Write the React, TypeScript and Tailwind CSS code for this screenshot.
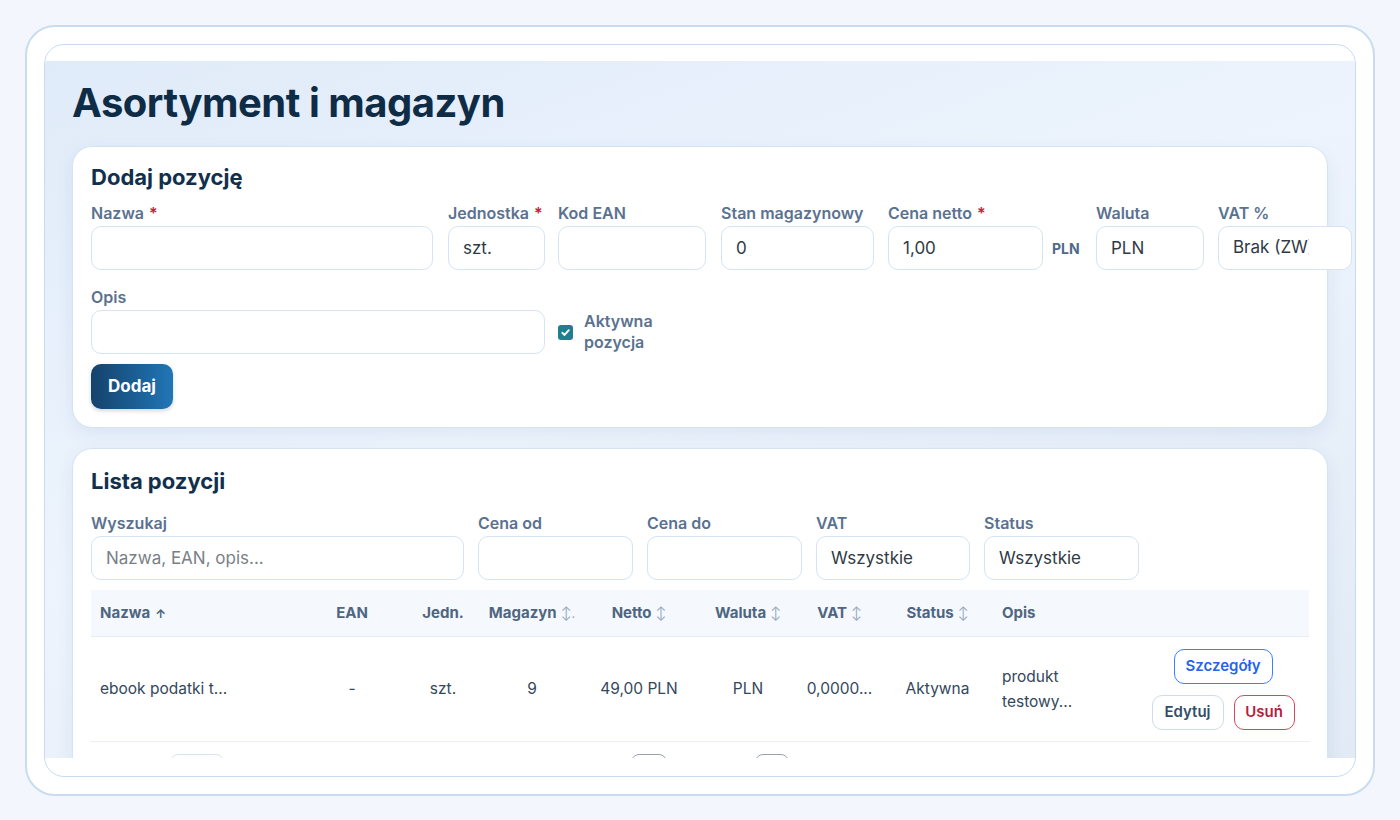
import React from 'react';

const FIELD_INPUT =
  'h-[44px] w-full rounded-[10px] border border-[#d5e3f3] bg-white px-[14px] text-[17px] text-[#2f3a45] outline-none placeholder:text-[#7a7f86]';

function Label({ text, required }: { text: string; required?: boolean }) {
  return (
    <div className="h-5 text-[16px] leading-5 font-semibold text-[#5a7290] whitespace-nowrap">
      {text}
      {required && <span className="ml-[5px] text-[#c8203a]">*</span>}
    </div>
  );
}

function Field({
  label,
  required,
  value,
  placeholder,
  className,
}: {
  label: string;
  required?: boolean;
  value?: string;
  placeholder?: string;
  className: string;
}) {
  return (
    <div className={`flex shrink-0 flex-col gap-[3px] ${className}`}>
      <Label text={label} required={required} />
      <input className={FIELD_INPUT} defaultValue={value} placeholder={placeholder} readOnly />
    </div>
  );
}

const COLS = 'grid grid-cols-[214px_94px_88px_90px_124px_94px_89px_107px_146px_172px]';

function SortHead({ text, arrow = '↕' }: { text: string; arrow?: string }) {
  return (
    <span>
      {text}
      <span className={arrow === '↑' ? 'ml-[5px] text-[12px] text-[#4f6680]' : 'ml-[4px] text-[13px] font-normal text-[#9aabbd]'}>
        {arrow}
      </span>
    </span>
  );
}

export default function App() {
  return (
    <div className="h-[820px] bg-[#f3f7fd] p-[25px] font-['Inter',sans-serif]">
      {/* Outer frame */}
      <div className="h-[771px] rounded-[30px] border-2 border-[#c9dcef] bg-white p-[17px]">
        {/* Inner frame */}
        <div className="h-full overflow-hidden rounded-[20px] border border-[#c9dcef] bg-white pt-[16px] pb-[18px]">
          <div className="h-full overflow-hidden bg-[linear-gradient(160deg,#e0ebf9_0%,#edf4fd_45%,#e1eaf5_100%)] px-[27px] pt-[18px]">
            <h1 className="h-[48px] text-[40px] leading-[48px] font-bold tracking-[-0.5px] text-[#0f2c47]">
              Asortyment i magazyn
            </h1>

            {/* Dodaj pozycję */}
            <section className="mt-[19px] rounded-[20px] border border-[#d5e3f1] bg-white px-[18px] pt-[16px] pb-[18px] shadow-[0_6px_18px_rgba(40,80,140,0.08)]">
              <h2 className="h-[28px] text-[22px] leading-[28px] font-bold text-[#10304d]">Dodaj pozycję</h2>

              <div className="mt-[12px] flex">
                <Field label="Nazwa" required className="w-[342px]" />
                <Field label="Jednostka" required value="szt." className="ml-[15px] w-[97px]" />
                <Field label="Kod EAN" className="ml-[13px] w-[148px]" />
                <Field label="Stan magazynowy" value="0" className="ml-[15px] w-[153px]" />
                <Field label="Cena netto" required value="1,00" className="ml-[14px] w-[155px]" />
                <div className="ml-[9px] flex h-[44px] w-[30px] shrink-0 items-center self-end text-[14px] font-bold text-[#4f6a88]">
                  PLN
                </div>
                <Field label="Waluta" value="PLN" className="ml-[14px] w-[108px]" />
                <div className="ml-[14px] flex w-[134px] shrink-0 flex-col gap-[3px]">
                  <Label text="VAT %" />
                  <div className="flex h-[44px] items-center rounded-[10px] border border-[#d5e3f3] bg-white px-[14px] text-[17px] text-[#2f3a45]">
                    <span className="w-[76px] overflow-hidden whitespace-nowrap">Brak (ZW)</span>
                  </div>
                </div>
              </div>

              <div className="mt-[17px] flex">
                <Field label="Opis" className="w-[454px]" />
                <div className="ml-[13px] flex h-[44px] items-center gap-[11px] self-end">
                  <span className="flex h-[15px] w-[15px] items-center justify-center rounded-[3px] bg-[#1f7f8e]">
                    <svg viewBox="0 0 12 12" className="h-[11px] w-[11px]" fill="none" stroke="white" strokeWidth="2" strokeLinecap="round" strokeLinejoin="round">
                      <path d="M2.5 6.3 5 8.7 9.6 3.4" />
                    </svg>
                  </span>
                  <span className="text-[16px] leading-[21px] font-semibold text-[#5a7290]">
                    Aktywna
                    <br />
                    pozycja
                  </span>
                </div>
              </div>

              <button className="mt-[10px] h-[45px] w-[82px] rounded-[10px] bg-[linear-gradient(90deg,#15426c,#2176b6)] text-[17px] font-bold text-white shadow-[0_2px_4px_rgba(20,60,110,0.2)]">
                Dodaj
              </button>
            </section>

            {/* Lista pozycji */}
            <section className="mt-[20px] rounded-[20px] border border-[#d5e3f1] bg-white px-[18px] pt-[18px] shadow-[0_6px_18px_rgba(40,80,140,0.08)]">
              <h2 className="h-[28px] text-[22px] leading-[28px] font-bold text-[#10304d]">Lista pozycji</h2>

              <div className="mt-[18px] flex gap-[14px]">
                <Field label="Wyszukaj" placeholder="Nazwa, EAN, opis..." className="w-[373px]" />
                <Field label="Cena od" className="w-[155px]" />
                <Field label="Cena do" className="w-[155px]" />
                <Field label="VAT" value="Wszystkie" className="w-[154px]" />
                <Field label="Status" value="Wszystkie" className="w-[155px]" />
              </div>

              <div className="mt-[10px] w-[1218px] text-[15px]">
                <div className={`${COLS} h-[47px] items-center border-b border-[#e6eef7] bg-[#f5f9fe] font-bold text-[#4f6680]`}>
                  <div className="pl-[9px]">
                    <SortHead text="Nazwa" arrow="↑" />
                  </div>
                  <div className="text-center">EAN</div>
                  <div className="text-center">Jedn.</div>
                  <div className="text-center whitespace-nowrap">
                    <SortHead text="Magazyn" arrow="↕." />
                  </div>
                  <div className="text-center">
                    <SortHead text="Netto" />
                  </div>
                  <div className="text-center">
                    <SortHead text="Waluta" />
                  </div>
                  <div className="text-center">
                    <SortHead text="VAT" />
                  </div>
                  <div className="text-center">
                    <SortHead text="Status" />
                  </div>
                  <div className="pl-[11px]">Opis</div>
                  <div />
                </div>

                <div className={`${COLS} h-[105px] items-center border-b border-[#e6eef7] text-[15.5px] text-[#33475b]`}>
                  <div className="pl-[9px]">ebook podatki t...</div>
                  <div className="text-center">-</div>
                  <div className="text-center">szt.</div>
                  <div className="text-center">9</div>
                  <div className="text-center">49,00 PLN</div>
                  <div className="text-center">PLN</div>
                  <div className="text-center">0,0000...</div>
                  <div className="text-center">Aktywna</div>
                  <div className="pl-[11px] leading-[25px]">
                    produkt
                    <br />
                    testowy...
                  </div>
                  <div className="flex flex-col items-center gap-[11px]">
                    <button className="h-[35px] w-[99px] rounded-[10px] border-[1.5px] border-[#3b82f6] text-[15px] font-semibold text-[#2563eb]">
                      Szczegóły
                    </button>
                    <div className="flex gap-[10px]">
                      <button className="h-[35px] w-[72px] rounded-[10px] border-[1.5px] border-[#cfdce9] text-[15px] font-semibold text-[#334d66]">
                        Edytuj
                      </button>
                      <button className="h-[35px] w-[61px] rounded-[10px] border-[1.5px] border-[#d4485c] text-[15px] font-semibold text-[#b91c3c]">
                        Usuń
                      </button>
                    </div>
                  </div>
                </div>

                {/* next row, cut off by the frame */}
                <div className="relative h-[60px]">
                  <div className="absolute top-[12px] left-[79px] h-[30px] w-[54px] rounded-[8px] border border-[#d5e3f3]" />
                  <div className="absolute top-[12px] left-[540px] h-[30px] w-[36px] rounded-[8px] border border-[#9aa3ad]" />
                  <div className="absolute top-[12px] left-[664px] h-[30px] w-[34px] rounded-[8px] border border-[#9aa3ad]" />
                </div>
              </div>
            </section>
          </div>
        </div>
      </div>
    </div>
  );
}
